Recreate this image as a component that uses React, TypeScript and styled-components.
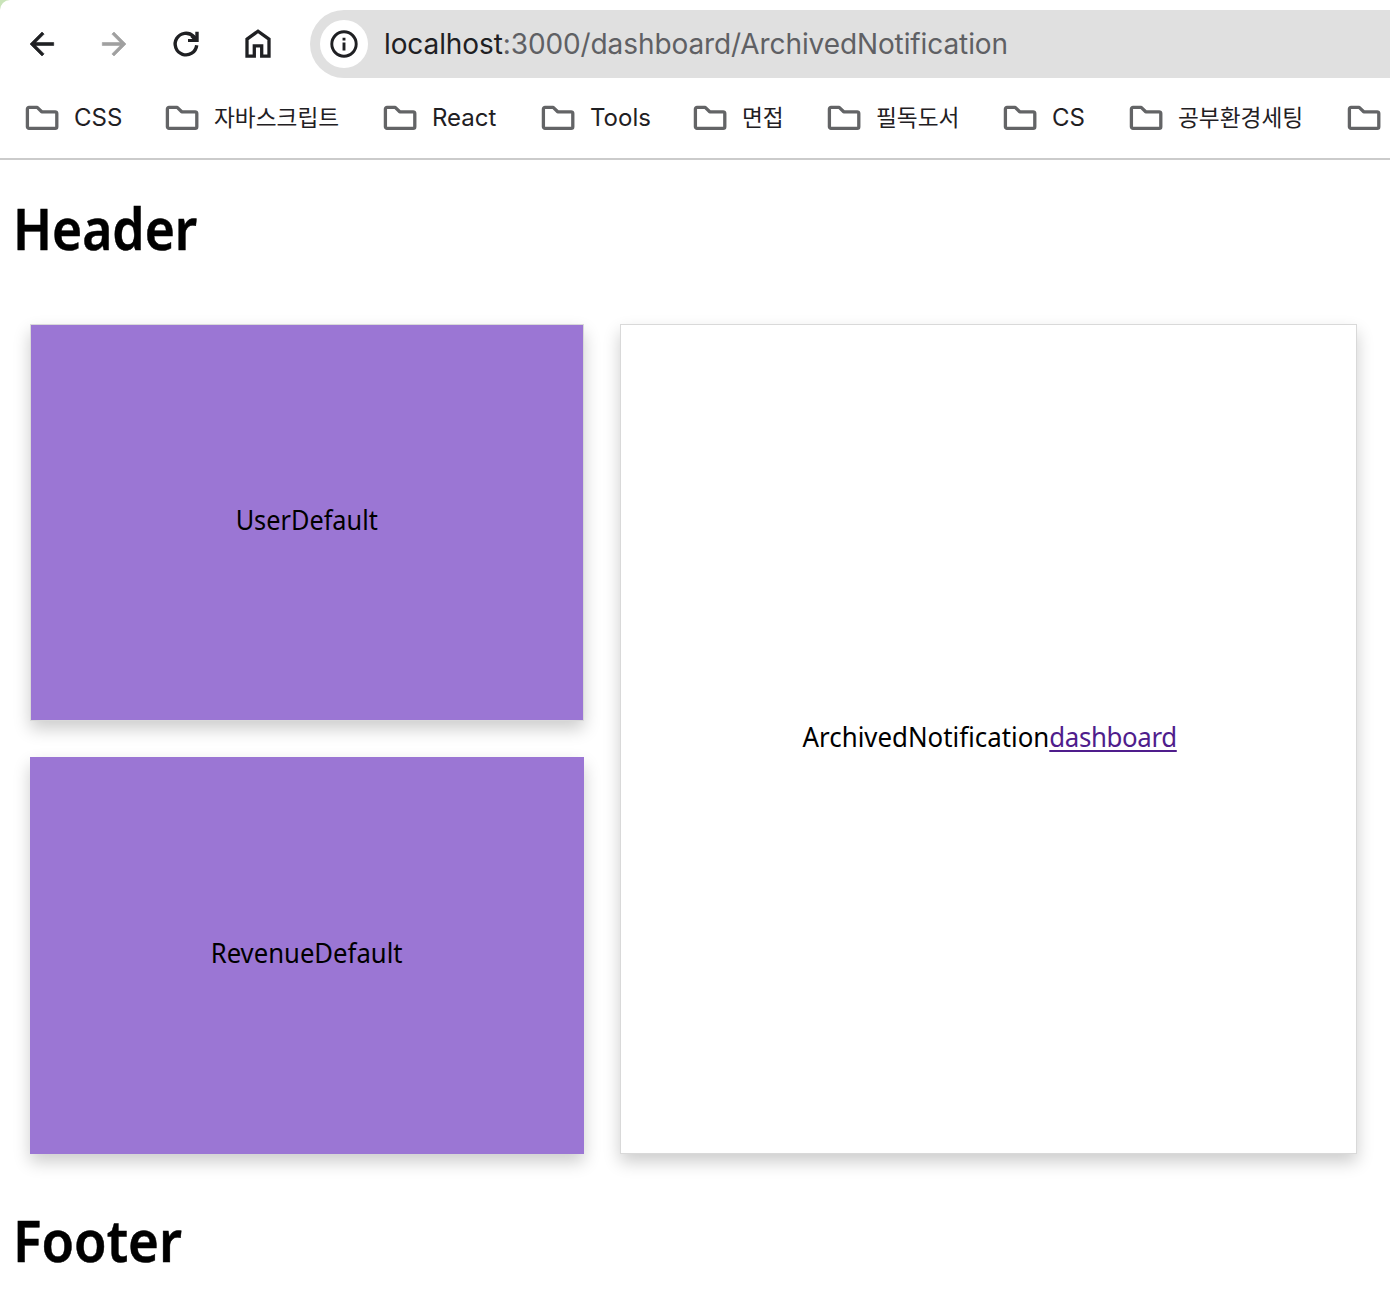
import React from "react";
import styled, { createGlobalStyle } from "styled-components";

const GlobalStyle = createGlobalStyle`
  *, *::before, *::after { box-sizing: border-box; }
  body {
    margin: 0;
    background: #c9e4b9;
    overflow: hidden;
    font-family: "Noto Sans", "Noto Sans CJK KR", sans-serif;
  }
`;

const Window = styled.div`
  display: flex;
  flex-direction: column;
  width: 1390px;
  height: 1302px;
  background: #fff;
  border-top-left-radius: 10px;
  overflow: hidden;
`;

const Toolbar = styled.div`
  display: flex;
  align-items: center;
  flex: none;
  height: 68px;
  margin-top: 10px;
  padding-left: 6px;
`;

const ToolButton = styled.button<{ $disabled?: boolean }>`
  display: grid;
  place-items: center;
  flex: none;
  width: 72px;
  height: 68px;
  padding: 0;
  border: 0;
  background: none;
  color: ${(p) => (p.$disabled ? "#a0a0a0" : "#1f2023")};
`;

const AddressBar = styled.div`
  display: flex;
  align-items: center;
  flex: 1;
  height: 68px;
  margin-left: 16px;
  padding-left: 10px;
  border-radius: 34px 0 0 34px;
  background: #e0e0e0;
`;

const SiteInfo = styled.span`
  display: grid;
  place-items: center;
  width: 48px;
  height: 48px;
  border-radius: 50%;
  background: #fff;
  color: #1f2023;
`;

const Url = styled.span`
  margin-left: 16px;
  color: #5f6064;
  font: 400 28px/34px Inter, sans-serif;
  letter-spacing: -0.1px;
  white-space: nowrap;
`;

const Host = styled.span`
  color: #1f2023;
`;

const Bookmarks = styled.nav`
  display: flex;
  align-items: center;
  gap: 44px;
  flex: none;
  height: 82px;
  padding: 0 0 0 25px;
  border-bottom: 2px solid #cbcbcb;
  overflow: hidden;
`;

const Bookmark = styled.span<{ $width: number }>`
  display: flex;
  align-items: center;
  gap: 15px;
  flex: none;
  width: ${(p) => p.$width}px;
  color: #1f2023;
  white-space: nowrap;

  svg { flex: none; }
`;

const BookmarkLabel = styled.span<{ $korean?: boolean }>`
  padding-bottom: ${(p) => (p.$korean ? 3 : 0)}px;
  font-family: ${(p) => (p.$korean ? '"Noto Sans CJK KR"' : "Inter")}, sans-serif;
  font-size: ${(p) => (p.$korean ? 22.7 : 24)}px;
  line-height: 32px;
`;

const Page = styled.main`
  display: flex;
  flex-direction: column;
  flex: 1;
`;

const Title = styled.h1<{ $stretch: number }>`
  margin: 34px 0 0 13px;
  color: #000;
  font-size: 57px;
  font-weight: 600;
  line-height: 68px;
  -webkit-text-stroke: 0.5px #000;
  transform: scaleX(${(p) => p.$stretch});
  transform-origin: left;
`;

const Board = styled.div`
  display: grid;
  grid-template-columns: 554px 737px;
  grid-template-rows: 397px 397px;
  gap: 36px;
  margin: 62px 0 18px 30px;
`;

const Card = styled.section<{ $filled?: boolean; $bordered?: boolean; $tall?: boolean }>`
  display: flex;
  align-items: center;
  justify-content: center;
  grid-row: ${(p) => (p.$tall ? "1 / 3" : "auto")};
  grid-column: ${(p) => (p.$tall ? 2 : 1)};
  padding-bottom: ${(p) => (p.$filled ? 8 : 6)}px;
  padding-left: ${(p) => (p.$filled ? 0 : 2)}px;
  border: 1px solid ${(p) => (p.$bordered ? "#d9d9d9" : "#9b76d4")};
  background: ${(p) => (p.$filled ? "#9b76d4" : "#fff")};
  box-shadow: 0 8px 16px rgba(0, 0, 0, 0.2);
`;

const CardText = styled.span<{ $stretch: number }>`
  color: #000;
  font-size: 28px;
  line-height: 40px;
  white-space: nowrap;
  transform: scaleX(${(p) => p.$stretch});
`;

const CardLink = styled.a`
  color: #4f1d8c;
  letter-spacing: -0.4px;
  text-decoration: underline;
  text-decoration-thickness: 2px;
  text-underline-offset: 3px;
  text-decoration-skip-ink: none;
`;

const BackIcon = () => (
  <svg width="36" height="36" viewBox="0 0 24 24" fill="currentColor" stroke="currentColor" strokeWidth="0.4">
    <path d="M19.8 11H7.83l5.59-5.59L12 4l-8 8 8 8 1.41-1.41L7.83 13H19.8v-2z" />
  </svg>
);

const ForwardIcon = () => (
  <svg width="36" height="36" viewBox="0 0 24 24" fill="currentColor" stroke="currentColor" strokeWidth="0.4">
    <path d="M4.2 13h11.97l-5.59 5.59L12 20l8-8-8-8-1.41 1.41L16.17 11H4.2v2z" />
  </svg>
);

const ReloadIcon = () => (
  <svg width="36" height="36" viewBox="0 0 36 36" fill="none" stroke="currentColor" strokeWidth="3.4">
    <path d="M28.7 19.2A10.8 10.8 0 1 1 25.4 10.2L28.5 13.7" />
    <path d="M27.300 5.700h3.400V16H20V12.900h4.400L22.500 11l2.500-2.500 2.300 2z" fill="currentColor" stroke="none" />
  </svg>
);

const HomeIcon = () => (
  <svg width="36" height="36" viewBox="0 0 36 36" fill="none" stroke="currentColor" strokeWidth="3.3">
    <path d="M7 30.2V13.2L18 5.2l11 8v17h-7.3V19.8h-7.4v10.4z" />
  </svg>
);

const InfoIcon = () => (
  <svg width="30" height="30" viewBox="0 0 30 30" fill="none" stroke="currentColor" strokeWidth="2.9">
    <circle cx="15" cy="15" r="12.2" />
    <path d="M15 13.5v8M15 8.7v2.8" />
  </svg>
);

const FolderIcon = () => (
  <svg width="34" height="26" viewBox="0 0 34 26" fill="none" stroke="#636466" strokeWidth="3.3" strokeLinejoin="round">
    <path d="M4 2.4h8.2l4.5 4.4H30.2a1.6 1.6 0 0 1 1.6 1.6v13.3a1.6 1.6 0 0 1-1.6 1.6H4a1.6 1.6 0 0 1-1.6-1.6V4A1.6 1.6 0 0 1 4 2.4z" />
  </svg>
);

const bookmarks = [
  { label: "CSS", width: 96 },
  { label: "자바스크립트", width: 174, korean: true },
  { label: "React", width: 114 },
  { label: "Tools", width: 108 },
  { label: "면접", width: 90, korean: true },
  { label: "필독도서", width: 132, korean: true },
  { label: "CS", width: 82 },
  { label: "공부환경세팅", width: 174, korean: true },
];

export default function App() {
  return (
    <>
      <GlobalStyle />
      <Window>
        <Toolbar>
          <ToolButton aria-label="Back"><BackIcon /></ToolButton>
          <ToolButton aria-label="Forward" $disabled><ForwardIcon /></ToolButton>
          <ToolButton aria-label="Reload"><ReloadIcon /></ToolButton>
          <ToolButton aria-label="Home"><HomeIcon /></ToolButton>
          <AddressBar>
            <SiteInfo><InfoIcon /></SiteInfo>
            <Url><Host>localhost</Host>:3000/dashboard/ArchivedNotification</Url>
          </AddressBar>
        </Toolbar>
        <Bookmarks>
          {bookmarks.map((b) => (
            <Bookmark key={b.label} $width={b.width}>
              <FolderIcon />
              <BookmarkLabel $korean={b.korean}>{b.label}</BookmarkLabel>
            </Bookmark>
          ))}
          <Bookmark $width={34}><FolderIcon /></Bookmark>
        </Bookmarks>
        <Page>
          <Title $stretch={0.905}>Header</Title>
          <Board>
            <Card $filled $bordered><CardText $stretch={0.903}>UserDefault</CardText></Card>
            <Card $filled><CardText $stretch={0.917}>RevenueDefault</CardText></Card>
            <Card $bordered $tall>
              <CardText $stretch={0.923}>
                ArchivedNotification<CardLink href="#dashboard">dashboard</CardLink>
              </CardText>
            </Card>
          </Board>
          <Title $stretch={0.927}>Footer</Title>
        </Page>
      </Window>
    </>
  );
}
